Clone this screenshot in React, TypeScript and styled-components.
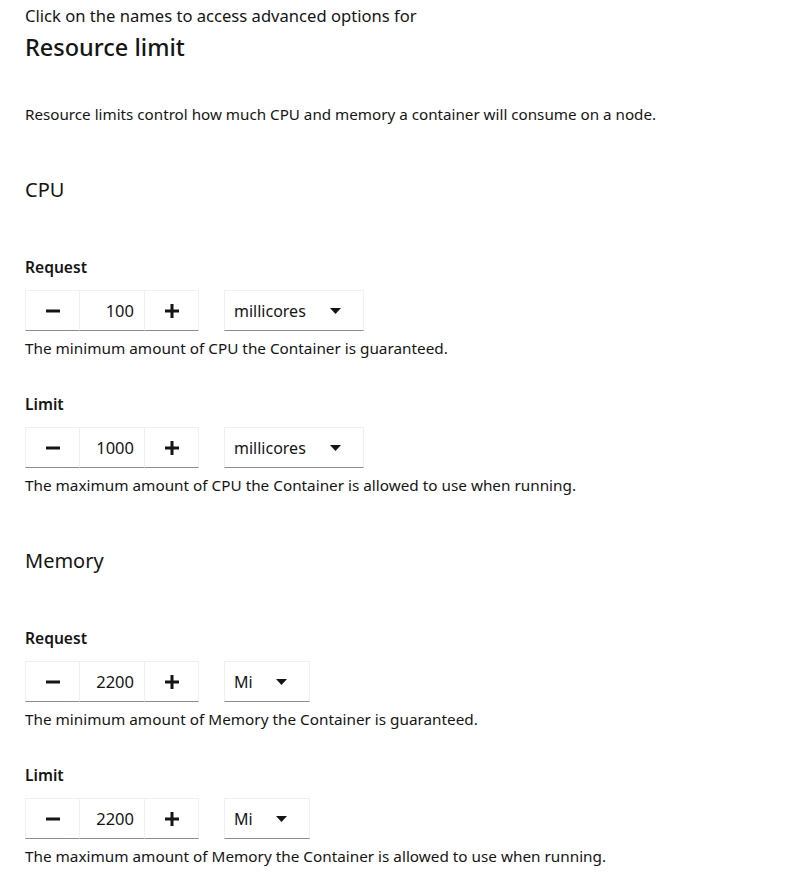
import React from "react";
import styled, { createGlobalStyle } from "styled-components";

const GlobalStyle = createGlobalStyle`
  body {
    margin: 0;
    background: #ffffff;
    color: #151515;
    font-family: "Noto Sans", "Open Sans", sans-serif;
  }
`;

const Page = styled.div`
  display: flex;
  flex-direction: column;
  padding: 4px 25px 0;
`;

const Intro = styled.div`
  font-size: 16.6px;
  line-height: 24px;
`;

const Heading = styled.h1`
  margin: 4px 0 0;
  font-size: 23.5px;
  line-height: 30px;
  font-weight: 500;
`;

const Description = styled.p`
  margin: 40px 0 0;
  font-size: 15.2px;
  line-height: 24px;
`;

const SectionTitle = styled.h2`
  margin: 49px 0 0;
  font-size: 20px;
  line-height: 30px;
  font-weight: 400;
`;

const Field = styled.div<{ first?: boolean }>`
  display: flex;
  flex-direction: column;
  margin-top: ${(p) => (p.first ? "51px" : "33px")};
`;

const Label = styled.label`
  font-size: 15.6px;
  line-height: 22px;
  font-weight: 600;
`;

const Controls = styled.div`
  display: flex;
  gap: 25px;
  margin-top: 12px;
  height: 41px;
`;

const NumberGroup = styled.div`
  display: flex;
`;

const StepButton = styled.button`
  width: 55px;
  height: 100%;
  display: flex;
  align-items: center;
  justify-content: center;
  background: #ffffff;
  border: 1px solid #f0f0f0;
  border-bottom-color: #8a8d90;
  padding: 0;
  margin: 0;
  color: #151515;
  & + & {
    border-left: none;
  }
`;

const NumberInput = styled.div`
  width: 64px;
  box-sizing: border-box;
  height: 100%;
  display: flex;
  align-items: center;
  justify-content: flex-end;
  padding-right: 10px;
  border-top: 1px solid #f0f0f0;
  border-bottom: 1px solid #8a8d90;
  font-size: 16.5px;
`;

const Select = styled.div<{ width: number }>`
  width: ${(p) => p.width}px;
  box-sizing: border-box;
  height: 100%;
  display: flex;
  align-items: center;
  justify-content: space-between;
  padding: 0 22px 0 9px;
  border: 1px solid #f0f0f0;
  border-bottom-color: #8a8d90;
  font-size: 16px;
`;

const Helper = styled.div`
  margin-top: 5px;
  font-size: 15.3px;
  line-height: 24px;
`;

const Minus = () => (
  <svg width="14" height="4" viewBox="0 0 14 4">
    <rect x="0" y="0.5" width="14" height="3" fill="#151515" />
  </svg>
);

const Plus = () => (
  <svg width="14" height="14" viewBox="0 0 14 14">
    <rect x="0" y="5.5" width="14" height="3" fill="#151515" />
    <rect x="5.5" y="0" width="3" height="14" fill="#151515" />
  </svg>
);

const Caret = () => (
  <svg width="11" height="6" viewBox="0 0 11 6">
    <path d="M0 0 H11 L5.5 6 Z" fill="#151515" />
  </svg>
);

type FieldProps = {
  label: string;
  value: string;
  unit: string;
  unitWidth: number;
  helper: string;
  first?: boolean;
};

const ResourceField = ({ label, value, unit, unitWidth, helper, first }: FieldProps) => (
  <Field first={first}>
    <Label>{label}</Label>
    <Controls>
      <NumberGroup>
        <StepButton aria-label="minus">
          <Minus />
        </StepButton>
        <NumberInput>{value}</NumberInput>
        <StepButton aria-label="plus">
          <Plus />
        </StepButton>
      </NumberGroup>
      <Select width={unitWidth}>
        <span>{unit}</span>
        <Caret />
      </Select>
    </Controls>
    <Helper>{helper}</Helper>
  </Field>
);

export default function App() {
  return (
    <Page>
      <GlobalStyle />
      <Intro>Click on the names to access advanced options for</Intro>
      <Heading>Resource limit</Heading>
      <Description>
        Resource limits control how much CPU and memory a container will consume on a node.
      </Description>

      <SectionTitle>CPU</SectionTitle>
      <ResourceField
        first
        label="Request"
        value="100"
        unit="millicores"
        unitWidth={140}
        helper="The minimum amount of CPU the Container is guaranteed."
      />
      <ResourceField
        label="Limit"
        value="1000"
        unit="millicores"
        unitWidth={140}
        helper="The maximum amount of CPU the Container is allowed to use when running."
      />

      <SectionTitle>Memory</SectionTitle>
      <ResourceField
        first
        label="Request"
        value="2200"
        unit="Mi"
        unitWidth={86}
        helper="The minimum amount of Memory the Container is guaranteed."
      />
      <ResourceField
        label="Limit"
        value="2200"
        unit="Mi"
        unitWidth={86}
        helper="The maximum amount of Memory the Container is allowed to use when running."
      />
    </Page>
  );
}
